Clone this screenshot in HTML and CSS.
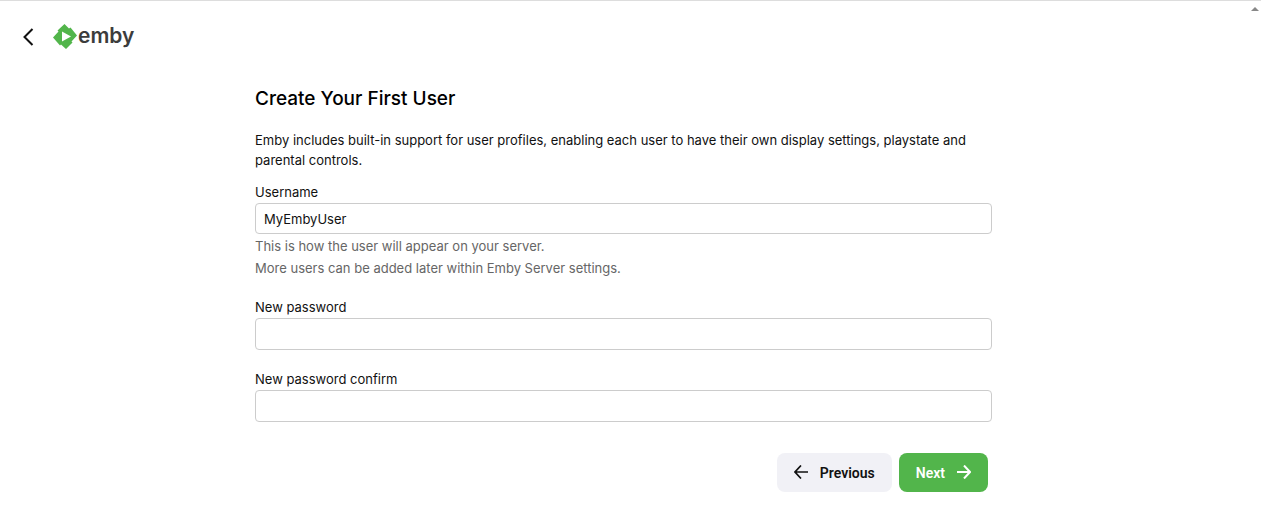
FILE: index.html
```html
<!DOCTYPE html>
<html lang="en">
<head>
<meta charset="utf-8">
<title>Emby</title>
<link rel="stylesheet" href="styles.css">
</head>
<body>
<header class="topbar">
  <button class="back" type="button" aria-label="Back"><svg width="12" height="18" viewBox="0 0 12 18"><path d="M10.500 1 2.500 9l8 8" fill="none" stroke="#111" stroke-width="2"/></svg></button>
  <a class="logo" href="#"><svg width="24" height="25" viewBox="0 0 24 25"><path d="M11.500 0 16 4.500 17.500 3.500 24 11.500 18.500 17.500 19.500 18.500 13 25 8 20.500 7 21.500 0 13.500 5.500 7.500 4.500 6.500Z" fill="#52b54b"/><path d="M9 7.500v10L18 12.500Z" fill="#fff"/></svg><span class="brand">emby</span></a>
  <span class="scroll-up"></span>
</header>
<div class="page">
<main class="wizard">
  <h1 class="title">Create Your First User</h1>
  <p class="intro">Emby includes built-in support for user profiles, enabling each user to have their own display settings, playstate and parental controls.</p>
  <form class="form">
    <div class="field">
      <label class="label" for="user">Username</label>
      <input class="input" id="user" type="text" value="MyEmbyUser">
      <p class="hint">This is how the user will appear on your server.</p>
      <p class="hint">More users can be added later within Emby Server settings.</p>
    </div>
    <div class="field">
      <label class="label" for="pw">New password</label>
      <input class="input password" id="pw" type="password">
    </div>
    <div class="field">
      <label class="label" for="pw2">New password confirm</label>
      <input class="input password" id="pw2" type="password">
    </div>
    <div class="actions">
      <button class="button" type="button"><svg class="arrow" width="14" height="14" viewBox="0 0 14 14"><path d="M14 7H1M7 .500 1 7l6 6.500" fill="none" stroke="currentColor" stroke-width="1.700"/></svg>Previous</button>
      <button class="button next" type="button">Next<svg class="arrow" width="14" height="14" viewBox="0 0 14 14"><path d="M0 7h13M7 .500 13 7l-6 6.500" fill="none" stroke="currentColor" stroke-width="2"/></svg></button>
    </div>
  </form>
</main>
</div>
</body>
</html>
```
FILE: styles.css
```css
* { box-sizing: border-box; }
body { margin: 0; background: #fff; color: #111; font: 13px/20px Inter, sans-serif; border-top: 1px solid #ddd; }
.topbar { display: flex; align-items: center; height: 71px; padding: 0 22px; gap: 19px; position: relative; }
.back { border: 0; padding: 0; background: none; display: flex; }
.logo { display: flex; align-items: center; gap: 1px; color: #3c3c3c; text-decoration: none; }
.brand { padding-bottom: 2px; font: 600 21px/24px Inter, sans-serif; }
.scroll-up { position: absolute; right: 2px; top: 6px; border: 4px solid transparent; border-top: 0; border-bottom: 4px solid #888; }
.page { padding-right: 14px; }
.wizard { width: 59.1%; margin: 0 auto; padding: 12px 0 26px; }
.title { margin: 0 0 16px; font: 500 19px/30px Inter, sans-serif; color: #000; }
.intro { margin: 0 0 12px; }
.form, .field { display: flex; flex-direction: column; }
.form { gap: 19px; }
.label { line-height: 20px; margin-bottom: 1px; }
.input { height: 31px; width: 100%; padding: 0 8px; border: 1px solid #ccc; border-radius: 4px; font: inherit; color: inherit; background: #fff; }
.password { height: 32px; }
.hint { margin: 2px 0 0; color: #666; }
.actions { display: flex; justify-content: flex-end; gap: 7px; padding: 12px 4px 0; }
.button { display: flex; align-items: center; gap: 12px; height: 39px; padding: 0 17px; border: 0; border-radius: 8px; background: #f1f1f6; color: #111; font: 600 14px/20px Roboto, sans-serif; }
.arrow { margin-bottom: 2px; }
.next { background: #52b54b; color: #fff; }
```
